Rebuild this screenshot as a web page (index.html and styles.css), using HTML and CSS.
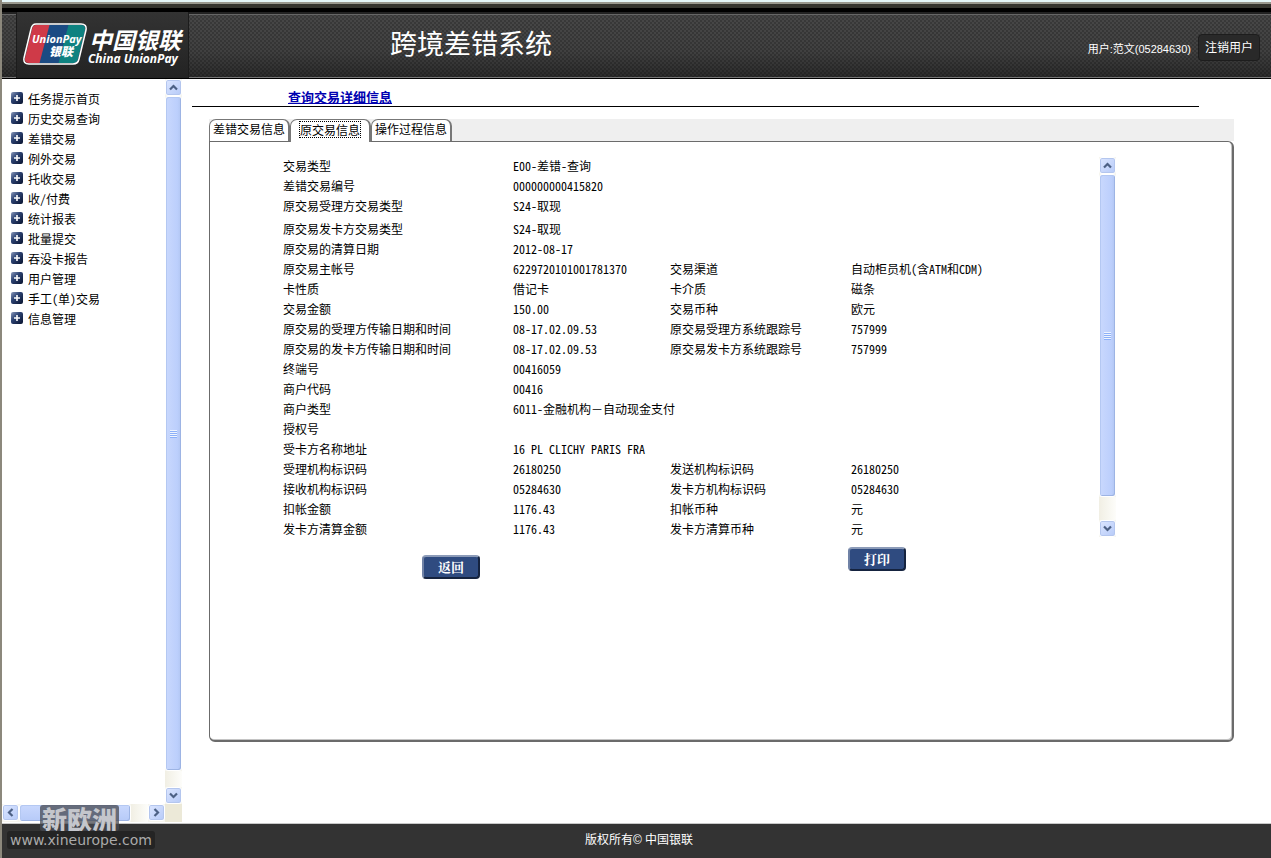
FILE: index.html
```html
<!DOCTYPE html>
<html lang="zh-CN">
<head>
<meta charset="utf-8">
<title>跨境差错系统</title>
<link rel="stylesheet" href="styles.css">
</head>
<body>
<svg class="defs" aria-hidden="true">
  <defs>
    <linearGradient id="navy" x1="0" y1="0" x2="1" y2="1"><stop offset="0" stop-color="#8d9cbc"/><stop offset=".4" stop-color="#2c4272"/><stop offset="1" stop-color="#08132e"/></linearGradient>
    <symbol id="plus" viewBox="0 0 12 12"><rect width="12" height="12" rx="2" fill="url(#navy)"/><path d="M6 3v6M3 6h6" stroke="#fff" stroke-width="1.6"/></symbol>
    <symbol id="up" viewBox="0 0 9 9"><path d="M1 6.5 4.5 3 8 6.5" fill="none" stroke="#4d6185" stroke-width="2.2"/></symbol>
    <symbol id="down" viewBox="0 0 9 9"><path d="M1 2.5 4.5 6 8 2.5" fill="none" stroke="#4d6185" stroke-width="2.2"/></symbol>
    <symbol id="left" viewBox="0 0 9 9"><path d="M6.5 1 3 4.5 6.5 8" fill="none" stroke="#4d6185" stroke-width="2.2"/></symbol>
    <symbol id="right" viewBox="0 0 9 9"><path d="M2.5 1 6 4.5 2.5 8" fill="none" stroke="#4d6185" stroke-width="2.2"/></symbol>
  </defs>
</svg>
<div class="strip"></div>
<header class="header">
  <div class="brand">
    <svg class="card" viewBox="0 0 64 42" aria-hidden="true">
      <defs><clipPath id="cardclip"><path d="M13 2H58Q63 2 62 7L55 36Q54 40 50 40H6Q1 40 2 35L9 6Q10 2 13 2Z"/></clipPath></defs>
      <g clip-path="url(#cardclip)">
        <rect width="64" height="42" fill="#cf3a48"/>
        <path d="M27 0H64V42H16Z" fill="#1b4b83"/>
        <path d="M46 0H64V42H35Z" fill="#0e8280"/>
      </g>
      <path d="M13 1H58Q64 1 63 7L56 36Q55 41 50 41H6Q0 41 1 35L8 6Q9 1 13 1Z" fill="none" stroke="#fff" stroke-width="1.5"/>
      <text class="card-en" x="9" y="20">UnionPay</text>
      <text class="card-cn" x="26" y="33">银联</text>
    </svg>
    <div class="brand-name"><span class="brand-cn">中国银联</span><span class="brand-en">China UnionPay</span></div>
  </div>
  <h1 class="system">跨境差错系统</h1>
  <div class="user"><span>用户:范文(05284630)</span><button class="logout" type="button">注销用户</button></div>
</header>
<div class="body">
  <aside class="side">
    <nav class="nav">
      <a href="#"><svg class="ico"><use href="#plus"/></svg>任务提示首页</a>
      <a href="#"><svg class="ico"><use href="#plus"/></svg>历史交易查询</a>
      <a href="#"><svg class="ico"><use href="#plus"/></svg>差错交易</a>
      <a href="#"><svg class="ico"><use href="#plus"/></svg>例外交易</a>
      <a href="#"><svg class="ico"><use href="#plus"/></svg>托收交易</a>
      <a href="#"><svg class="ico"><use href="#plus"/></svg>收/付费</a>
      <a href="#"><svg class="ico"><use href="#plus"/></svg>统计报表</a>
      <a href="#"><svg class="ico"><use href="#plus"/></svg>批量提交</a>
      <a href="#"><svg class="ico"><use href="#plus"/></svg>吞没卡报告</a>
      <a href="#"><svg class="ico"><use href="#plus"/></svg>用户管理</a>
      <a href="#"><svg class="ico"><use href="#plus"/></svg>手工(单)交易</a>
      <a href="#"><svg class="ico"><use href="#plus"/></svg>信息管理</a>
    </nav>
    <div class="vbar">
      <button class="arrow" type="button" aria-label="向上"><svg><use href="#up"/></svg></button>
      <div class="thumb side-thumb"><i class="grip"></i></div>
      <div class="rest side-rest"></div>
      <button class="arrow" type="button" aria-label="向下"><svg><use href="#down"/></svg></button>
    </div>
    <div class="hbar">
      <button class="arrow" type="button" aria-label="向左"><svg><use href="#left"/></svg></button>
      <div class="thumb hthumb"></div>
      <div class="rest"></div>
      <button class="arrow" type="button" aria-label="向右"><svg><use href="#right"/></svg></button>
    </div>
    <div class="corner"></div>
  </aside>
  <main class="main">
    <h2 class="title">查询交易详细信息</h2>
    <div class="sheet">
      <div class="tabs" role="tablist">
        <button class="tab" role="tab" type="button">差错交易信息</button>
        <button class="tab active" role="tab" type="button" aria-selected="true"><span>原交易信息</span></button>
        <button class="tab" role="tab" type="button">操作过程信息</button>
      </div>
      <section class="panel">
        <div class="scroller">
          <table class="info">
            <colgroup><col class="c1"><col class="c2"><col class="c3"><col></colgroup>
            <tbody>
            <tr><th>交易类型</th><td>E00-差错-查询</td><th></th><td></td></tr>
            <tr><th>差错交易编号</th><td>000000000415820</td><th></th><td></td></tr>
            <tr class="tall"><th>原交易受理方交易类型</th><td>S24-取现</td><th></th><td></td></tr>
            <tr><th>原交易发卡方交易类型</th><td>S24-取现</td><th></th><td></td></tr>
            <tr><th>原交易的清算日期</th><td>2012-08-17</td><th></th><td></td></tr>
            <tr><th>原交易主帐号</th><td>6229720101001781370</td><th>交易渠道</th><td>自动柜员机(含ATM和CDM)</td></tr>
            <tr><th>卡性质</th><td>借记卡</td><th>卡介质</th><td>磁条</td></tr>
            <tr><th>交易金额</th><td>150.00</td><th>交易币种</th><td>欧元</td></tr>
            <tr><th>原交易的受理方传输日期和时间</th><td>08-17.02.09.53</td><th>原交易受理方系统跟踪号</th><td>757999</td></tr>
            <tr><th>原交易的发卡方传输日期和时间</th><td>08-17.02.09.53</td><th>原交易发卡方系统跟踪号</th><td>757999</td></tr>
            <tr><th>终端号</th><td>00416059</td><th></th><td></td></tr>
            <tr><th>商户代码</th><td>00416</td><th></th><td></td></tr>
            <tr><th>商户类型</th><td colspan="3">6011-金融机构－自动现金支付</td></tr>
            <tr><th>授权号</th><td></td><th></th><td></td></tr>
            <tr><th>受卡方名称地址</th><td>16 PL CLICHY PARIS FRA</td><th></th><td></td></tr>
            <tr><th>受理机构标识码</th><td>26180250</td><th>发送机构标识码</th><td>26180250</td></tr>
            <tr><th>接收机构标识码</th><td>05284630</td><th>发卡方机构标识码</th><td>05284630</td></tr>
            <tr><th>扣帐金额</th><td>1176.43</td><th>扣帐币种</th><td>元</td></tr>
            <tr><th>发卡方清算金额</th><td>1176.43</td><th>发卡方清算币种</th><td>元</td></tr>
            </tbody>
          </table>
          <div class="vbar info-bar">
            <button class="arrow" type="button" aria-label="向上"><svg><use href="#up"/></svg></button>
            <div class="thumb"><i class="grip"></i></div>
            <div class="rest info-rest"></div>
            <button class="arrow" type="button" aria-label="向下"><svg><use href="#down"/></svg></button>
          </div>
        </div>
        <div class="actions">
          <button class="btn back" type="button">返回</button>
          <button class="btn print" type="button">打印</button>
        </div>
      </section>
    </div>
  </main>
</div>
<footer class="footer">版权所有© 中国银联</footer>
<div class="mark"><span class="mark-cn">新欧洲</span><span class="mark-url">www.xineurope.com</span></div>
</body>
</html>
```

FILE: styles.css
```css
* { box-sizing: border-box; }

body {
  margin: 0;
  min-height: 100vh;
  display: flex;
  flex-direction: column;
  position: relative;
  border-left: 2px solid #8c887c;
  background: #fff;
  color: #000;
  font: 12px/20px "Noto Sans Mono CJK SC", "Noto Sans CJK SC", sans-serif;
}

button { font: inherit; padding: 0; margin: 0; border: 0; }
.defs { position: absolute; width: 0; height: 0; }

/* header */
.strip {
  height: 12px;
  background: linear-gradient(#e4f6f8 0 2px, #99998f 2px 4px, #35352f 4px 8px, #000 8px 12px);
}
.header {
  height: 67px;
  display: flex;
  border-bottom: 1px solid #000;
  background:
    linear-gradient(#222 0 2px, #666 2px 3px, transparent 3px 65px, #777 65px 66px),
    repeating-conic-gradient(rgba(0, 0, 0, .2) 0 25%, transparent 0 50%) 0 0 / 4px 4px,
    linear-gradient(#484848, #404040 60%, #2a2a2a);
}
.brand {
  width: 173px;
  margin-left: 14px;
  padding: 11px 0 0 6px;
  display: flex;
  gap: 1px;
  border: 1px solid #1c1c1c;
  border-width: 0 1px;
  background: linear-gradient(#333, #232323);
}
.card { width: 64px; height: 42px; flex: none; }
.card-en { font: italic bold 11px "Open Sans", sans-serif; fill: #fff; }
.card-cn { font: italic 900 12px "Noto Sans CJK SC", sans-serif; fill: #fff; }
.brand-name { display: flex; flex-direction: column; color: #fff; white-space: nowrap; padding-top: 3px; }
.brand-cn { font: italic bold 23px/26px "Noto Sans CJK SC", sans-serif; padding-left: 1px; }
.brand-en { font: italic bold 12px/14px "Noto Sans", sans-serif; }
.system {
  margin: 0 0 0 201px;
  color: #fff;
  font: 400 27px/62px "Noto Sans CJK SC", sans-serif;
}
.user {
  margin: 22px 11px 0 auto;
  display: flex;
  gap: 7px;
  color: #fff;
  font: 11px/30px "Liberation Sans", "Noto Sans CJK SC", sans-serif;
}
.logout {
  width: 62px;
  height: 27px;
  border: 1px solid #1d1d1d;
  border-radius: 4px;
  background: #292929;
  color: #fff;
  font-size: 12px;
  line-height: 24px;
}

.body { flex: 1; display: flex; }

/* sidebar */
.side {
  width: 180px;
  flex: none;
  display: grid;
  grid-template: 1fr 18px / 1fr 17px;
  padding-bottom: 1px;
}
.nav { padding: 10px 0 0 9px; }
.nav a { display: flex; gap: 5px; color: #000; text-decoration: none; }
.ico { width: 12px; height: 12px; margin-top: 3px; }

/* scroll bars */
.vbar { width: 17px; display: flex; flex-direction: column; background: #f6f5ee; }
.hbar { display: flex; background: #f6f5ee; }
.corner { background: #ece9d8; }
.arrow {
  flex: none;
  width: 17px;
  height: 17px;
  display: grid;
  place-items: center;
  border: 1px solid #fff;
  border-radius: 3px;
  box-shadow: inset 0 0 0 1px #b4c6ee;
  background: linear-gradient(135deg, #dce6ff, #b6caf8);
}
.arrow svg { width: 9px; height: 9px; }
.thumb {
  flex: 1;
  display: grid;
  place-items: center;
  border: 1px solid #fff;
  border-radius: 3px;
  box-shadow: inset -1px -1px 0 #9db4e4, inset 1px 1px 0 #b4c8f2;
  background: linear-gradient(90deg, #c9d8fd, #bccffc 75%, #b2c6f2);
}
.hthumb { background: linear-gradient(#c9d8fd, #b6caf8); }
.grip { width: 7px; height: 8px; background: repeating-linear-gradient(#eef4fe 0 1px, #8cb0f8 1px 2px); }
.rest { flex: none; width: 17px; background: linear-gradient(90deg, #f1efe4, #fdfdfa); }
.side-rest { height: 16px; }
.info-rest { height: 23px; }
.info-bar { margin-bottom: 3px; }

/* main */
.main { flex: 1; padding: 8px 37px 80px 10px; }
.title {
  margin: 0 35px 0 0;
  padding-left: 96px;
  border-bottom: 1px solid #000;
  color: #0000b0;
  font: bold 13px/19px "Noto Sans CJK SC", sans-serif;
  text-decoration: underline;
}
.sheet { margin: 12px 0 0 17px; }
.tabs { display: flex; height: 22px; background: #efefef; }
.tab {
  width: 81px;
  padding-bottom: 4px;
  border: 1px solid #777;
  border-right-width: 2px;
  border-bottom: 0;
  border-radius: 7px 7px 0 0;
  background: #fff;
  line-height: 17px;
  white-space: nowrap;
}
.active { position: relative; height: 23px; }
.active span { display: inline-block; outline: 1px dotted #000; line-height: 15px; }
.panel {
  min-height: 601px;
  padding: 15px 116px 0 73px;
  border: solid #6b6b6b;
  border-width: 1px 2px 2px 1px;
  border-radius: 0 6px 6px 6px;
  box-shadow: inset -1px -1px 0 #c4c4c4;
}
.scroller { display: flex; justify-content: space-between; }
.info { width: 740px; table-layout: fixed; border-collapse: collapse; }
.info th, .info td { height: 20px; padding: 0; line-height: 18px; text-align: left; vertical-align: top; font-weight: normal; white-space: nowrap; }
.info .tall th, .info .tall td { height: 23px; }
.c1 { width: 230px; }
.c2 { width: 157px; }
.c3 { width: 181px; }
.actions { display: flex; padding: 7px 0 0 139px; }
.btn {
  width: 58px;
  height: 24px;
  border: 2px solid;
  border-color: #8c9bb8 #15233f #15233f #7082a6;
  border-radius: 4px;
  background: #2f4b80;
  color: #fff;
  font: bold 13px/18px "Noto Serif CJK SC", "Noto Sans CJK SC", serif;
}
.back { margin-top: 8px; }
.print { margin-left: 368px; }

.footer {
  height: 35px;
  padding-left: 5px;
  border-top: 1px solid #c8c8c8;
  background: #333;
  color: #fff;
  font-family: "Liberation Sans", "Noto Sans CJK SC", sans-serif;
  line-height: 32px;
  text-align: center;
}

/* watermark over the lower left corner */
.mark {
  position: absolute;
  left: 5px;
  bottom: 9px;
  display: flex;
  flex-direction: column;
  align-items: flex-start;
  color: #aaa;
}
.mark-cn {
  margin-left: 33px;
  padding: 0 2px;
  border-radius: 3px;
  background: rgba(70, 72, 80, .75);
  color: #c4c6cc;
  font: 900 25px/26px "Noto Sans CJK SC", sans-serif;
}
.mark-url {
  padding: 0 3px;
  border-radius: 3px;
  background: #242424;
  font: 14px/18px "DejaVu Sans", sans-serif;
}
```
